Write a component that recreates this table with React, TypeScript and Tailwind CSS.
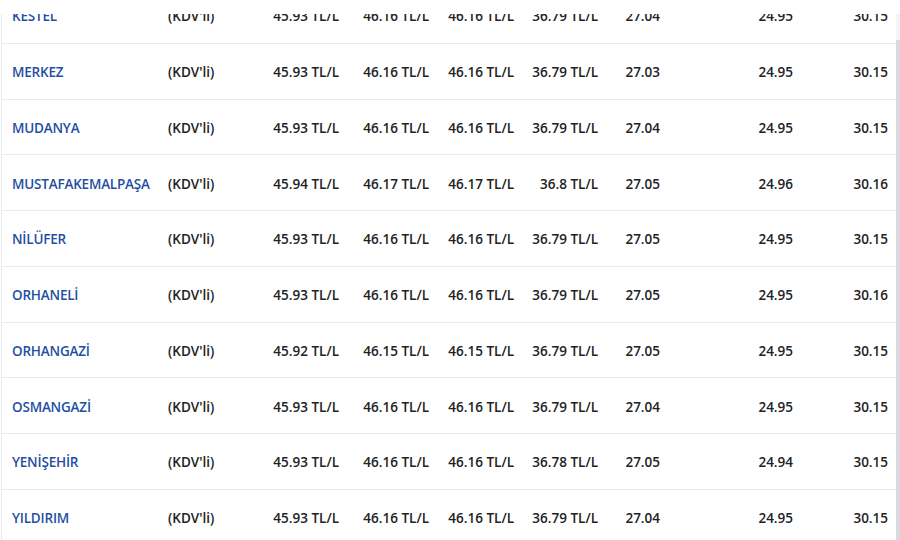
import React from "react";

type Row = { name: string; v: string[] };

const rows: Row[] = [
  { name: "KESTEL", v: ["45.93", "46.16", "46.16", "36.79", "27.04", "24.95", "30.15"] },
  { name: "MERKEZ", v: ["45.93", "46.16", "46.16", "36.79", "27.03", "24.95", "30.15"] },
  { name: "MUDANYA", v: ["45.93", "46.16", "46.16", "36.79", "27.04", "24.95", "30.15"] },
  { name: "MUSTAFAKEMALPAŞA", v: ["45.94", "46.17", "46.17", "36.8", "27.05", "24.96", "30.16"] },
  { name: "NİLÜFER", v: ["45.93", "46.16", "46.16", "36.79", "27.05", "24.95", "30.15"] },
  { name: "ORHANELİ", v: ["45.93", "46.16", "46.16", "36.79", "27.05", "24.95", "30.16"] },
  { name: "ORHANGAZİ", v: ["45.92", "46.15", "46.15", "36.79", "27.05", "24.95", "30.15"] },
  { name: "OSMANGAZİ", v: ["45.93", "46.16", "46.16", "36.79", "27.04", "24.95", "30.15"] },
  { name: "YENİŞEHİR", v: ["45.93", "46.16", "46.16", "36.78", "27.05", "24.94", "30.15"] },
  { name: "YILDIRIM", v: ["45.93", "46.16", "46.16", "36.79", "27.04", "24.95", "30.15"] },
];

export default function App() {
  return (
    <div
      className="w-[900px] h-[540px] bg-white overflow-hidden flex flex-col text-[13.5px] font-semibold text-[#222]"
      style={{ fontFamily: '"Open Sans", "Noto Sans", sans-serif' }}
    >
      <div className="h-[14px] shrink-0 bg-white" />
      <div className="flex flex-1 min-h-0 pl-[1px]">
        <div className="flex-1 overflow-hidden border-l border-[#e8eaee]">
          <div className="-mt-[26px]">
            {rows.map((r) => (
              <div key={r.name} className="flex items-center pt-[2px] h-[55.75px] border-b border-[#e8eaee]">
                <div className="w-[166px] pl-[10px] text-[#1f4fa3] whitespace-nowrap tracking-[-0.2px]">{r.name}</div>
                <div className="w-[90px] whitespace-nowrap">(KDV'li)</div>
                <div className="w-[81px] text-right whitespace-nowrap">{r.v[0]} TL/L</div>
                <div className="w-[90px] text-right whitespace-nowrap">{r.v[1]} TL/L</div>
                <div className="w-[85px] text-right whitespace-nowrap">{r.v[2]} TL/L</div>
                <div className="w-[84px] text-right whitespace-nowrap">{r.v[3]} TL/L</div>
                <div className="w-[62px] text-right whitespace-nowrap">{r.v[4]}</div>
                <div className="w-[133px] text-right whitespace-nowrap">{r.v[5]}</div>
                <div className="w-[95px] text-right whitespace-nowrap">{r.v[6]}</div>
              </div>
            ))}
          </div>
        </div>
        <div className="w-[4px] shrink-0 bg-[#f3f4f6] flex flex-col">
          <div className="h-[26px] shrink-0" />
          <div className="flex-1 bg-[#d9dbe0]" />
        </div>
      </div>
    </div>
  );
}
